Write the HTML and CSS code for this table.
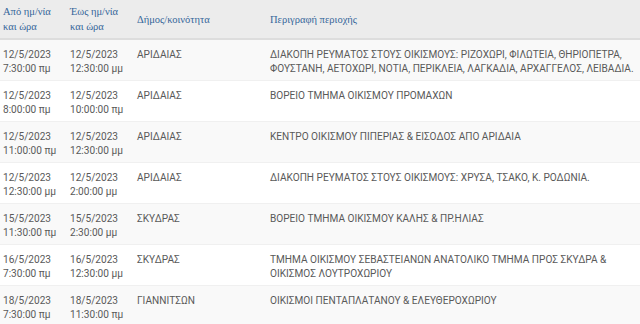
FILE: index.html
```html
<!DOCTYPE html>
<html lang="el">
<head>
<meta charset="utf-8">
<link rel="stylesheet" href="styles.css">
</head>
<body>
<table class="outages">
  <thead>
    <tr>
      <th class="c-from">Από ημ/νία<br>και ώρα</th>
      <th class="c-to">Έως ημ/νία<br>και ώρα</th>
      <th class="c-area">Δήμος/κοινότητα</th>
      <th class="c-desc">Περιγραφή περιοχής</th>
    </tr>
  </thead>
  <tbody>
    <tr>
      <td>12/5/2023<br>7:30:00 πμ</td>
      <td>12/5/2023<br>12:30:00 μμ</td>
      <td>ΑΡΙΔΑΙΑΣ</td>
      <td>ΔΙΑΚΟΠΗ ΡΕΥΜΑΤΟΣ ΣΤΟΥΣ ΟΙΚΙΣΜΟΥΣ: ΡΙΖΟΧΩΡΙ, ΦΙΛΩΤΕΙΑ, ΘΗΡΙΟΠΕΤΡΑ, ΦΟΥΣΤΑΝΗ, ΑΕΤΟΧΩΡΙ, ΝΟΤΙΑ, ΠΕΡΙΚΛΕΙΑ, ΛΑΓΚΑΔΙΑ, ΑΡΧΑΓΓΕΛΟΣ, ΛΕΙΒΑΔΙΑ.</td>
    </tr>
    <tr>
      <td>12/5/2023<br>8:00:00 πμ</td>
      <td>12/5/2023<br>10:00:00 πμ</td>
      <td>ΑΡΙΔΑΙΑΣ</td>
      <td>ΒΟΡΕΙΟ ΤΜΗΜΑ ΟΙΚΙΣΜΟΥ ΠΡΟΜΑΧΩΝ</td>
    </tr>
    <tr>
      <td>12/5/2023<br>11:00:00 πμ</td>
      <td>12/5/2023<br>12:30:00 μμ</td>
      <td>ΑΡΙΔΑΙΑΣ</td>
      <td>ΚΕΝΤΡΟ ΟΙΚΙΣΜΟΥ ΠΙΠΕΡΙΑΣ &amp; ΕΙΣΟΔΟΣ ΑΠΟ ΑΡΙΔΑΙΑ</td>
    </tr>
    <tr>
      <td>12/5/2023<br>12:30:00 μμ</td>
      <td>12/5/2023<br>2:00:00 μμ</td>
      <td>ΑΡΙΔΑΙΑΣ</td>
      <td>ΔΙΑΚΟΠΗ ΡΕΥΜΑΤΟΣ ΣΤΟΥΣ ΟΙΚΙΣΜΟΥΣ: ΧΡΥΣΑ, ΤΣΑΚΟ, Κ. ΡΟΔΩΝΙΑ.</td>
    </tr>
    <tr>
      <td>15/5/2023<br>11:30:00 πμ</td>
      <td>15/5/2023<br>2:30:00 μμ</td>
      <td>ΣΚΥΔΡΑΣ</td>
      <td>ΒΟΡΕΙΟ ΤΜΗΜΑ ΟΙΚΙΣΜΟΥ ΚΑΛΗΣ &amp; ΠΡ.ΗΛΙΑΣ</td>
    </tr>
    <tr>
      <td>16/5/2023<br>7:30:00 πμ</td>
      <td>16/5/2023<br>12:30:00 μμ</td>
      <td>ΣΚΥΔΡΑΣ</td>
      <td>ΤΜΗΜΑ ΟΙΚΙΣΜΟΥ ΣΕΒΑΣΤΕΙΑΝΩΝ ΑΝΑΤΟΛΙΚΟ ΤΜΗΜΑ ΠΡΟΣ ΣΚΥΔΡΑ &amp; ΟΙΚΙΣΜΟΣ ΛΟΥΤΡΟΧΩΡΙΟΥ</td>
    </tr>
    <tr>
      <td>18/5/2023<br>7:30:00 πμ</td>
      <td>18/5/2023<br>11:30:00 πμ</td>
      <td>ΓΙΑΝΝΙΤΣΩΝ</td>
      <td>ΟΙΚΙΣΜΟΙ ΠΕΝΤΑΠΛΑΤΑΝΟΥ &amp; ΕΛΕΥΘΕΡΟΧΩΡΙΟΥ</td>
    </tr>
  </tbody>
</table>
</body>
</html>
```
FILE: styles.css
```css
html, body {
  margin: 0;
  padding: 0;
  background: #ffffff;
}
.outages {
  width: 640px;
  border-collapse: collapse;
  table-layout: fixed;
  font-family: Roboto, "Noto Sans", sans-serif;
  font-size: 10.1px;
  color: #595959;
}
.outages th {
  background: #ececec;
  color: #35669a;
  font-family: "Liberation Serif", "DejaVu Serif", serif;
  font-weight: normal;
  font-size: 10.5px;
  line-height: 15px;
  text-align: left;
  vertical-align: middle;
  padding: 4px 3px 4px 3px;
  height: 30px;
  border-bottom: 2px solid #dddddd;
}
.c-from { width: 61px; }
.c-to { width: 61px; }
.c-area { width: 127px; }
.outages td {
  vertical-align: top;
  padding: 8px 3px 4px 3px;
  line-height: 14px;
  border-top: 1px solid #f0f0f0;
}
.outages td:last-child {
  padding-right: 0;
}
.outages tbody tr:nth-child(odd) td {
  background: #f9f9f9;
}
```
